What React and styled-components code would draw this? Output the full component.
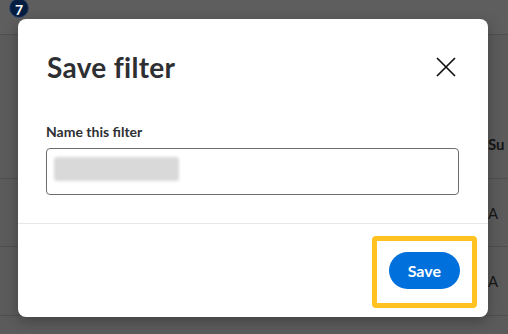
import React from 'react';
import styled, { createGlobalStyle } from 'styled-components';

const Global = createGlobalStyle`
  html, body { margin: 0; padding: 0; }
  body { font-family: Lato, "Noto Sans", sans-serif; }
  * { box-sizing: border-box; }
`;

const Page = styled.div`
  position: relative;
  width: 508px;
  height: 334px;
  overflow: hidden;
  background: #5b5b5b;
`;

const Table = styled.div`
  display: flex;
  flex-direction: column;
`;

const TableRow = styled.div`
  display: grid;
  grid-template-columns: 488px 1fr;
  align-items: ${p => p.$align || 'center'};
  height: ${p => p.$h}px;
  padding-bottom: ${p => p.$pb || 0}px;
  border-bottom: 1px solid #4f4f4f;
  background: ${p => p.$bg || 'transparent'};
`;

const Cell = styled.div`
  grid-column: 2;
  font-size: 15px;
  line-height: 18px;
  font-weight: ${p => (p.$head ? 700 : 400)};
  color: #161616;
  white-space: nowrap;
`;

const Badge = styled.div`
  position: absolute;
  left: 9px;
  top: -2px;
  width: 20px;
  height: 20px;
  border-radius: 50%;
  background: #041e42;
  border: 1px solid #3c4c66;
  color: #fff;
  font-size: 14px;
  font-weight: 700;
  display: flex;
  align-items: center;
  justify-content: center;
  padding-top: 2px;
`;

const Modal = styled.div`
  position: absolute;
  left: 18px;
  top: 19px;
  width: 470px;
  height: 298px;
  background: #fff;
  border-radius: 8px;
  box-shadow: 0 4px 14px rgba(0, 0, 0, 0.28);
  display: flex;
  flex-direction: column;
`;

const Header = styled.div`
  display: flex;
  align-items: center;
  justify-content: space-between;
  padding: 30px 32px 0 29px;
`;

const Title = styled.h2`
  margin: 0;
  font-size: 28px;
  line-height: 36px;
  font-weight: 700;
  letter-spacing: 0.3px;
  color: #2e2f32;
`;

const CloseButton = styled.button`
  border: 0;
  background: none;
  padding: 0;
  width: 20px;
  height: 20px;
  display: flex;
  cursor: pointer;
`;

const Body = styled.div`
  display: flex;
  flex-direction: column;
  gap: 6px;
  padding: 37px 29px 28px 28px;
  border-bottom: 1px solid #e6e6e6;
`;

const Label = styled.label`
  font-size: 14px;
  line-height: 20px;
  font-weight: 700;
  color: #2e2f32;
`;

const Input = styled.div`
  height: 47px;
  border: 1px solid #6d6e72;
  border-radius: 4px;
  padding: 8px 7px;
  display: flex;
`;

const Redacted = styled.div`
  width: 125px;
  height: 24px;
  background: #d9d9d9;
  border-radius: 3px;
  filter: blur(1.5px);
`;

const Footer = styled.div`
  display: flex;
  justify-content: flex-end;
  padding: 28px 28px 28px 28px;
`;

const Highlight = styled.div`
  position: relative;
`;

const Ring = styled.div`
  position: absolute;
  left: -17px;
  right: -17px;
  top: -16px;
  bottom: -19px;
  border: 5px solid #ffc220;
  border-radius: 4px;
  pointer-events: none;
`;

const PrimaryButton = styled.button`
  height: 37px;
  padding: 0 19px;
  border: 0;
  border-radius: 999px;
  background: #0071dc;
  color: #fff;
  font-family: Lato, "Noto Sans", sans-serif;
  font-size: 16px;
  font-weight: 700;
  line-height: 37px;
  cursor: pointer;
`;

export default function App() {
  return (
    <>
      <Global />
      <Page>
        <Table>
          <TableRow $h={35} $bg="#5e5e5e" />
          <TableRow $h={144} $align="end" $pb={25}>
            <Cell $head>Su</Cell>
          </TableRow>
          <TableRow $h={68}>
            <Cell>A</Cell>
          </TableRow>
          <TableRow $h={69}>
            <Cell>A</Cell>
          </TableRow>
        </Table>
        <Badge>7</Badge>
        <Modal role="dialog" aria-label="Save filter">
          <Header>
            <Title>Save filter</Title>
            <CloseButton aria-label="Close">
              <svg width="20" height="20" viewBox="0 0 20 20">
                <path d="M1 1 L19 19 M19 1 L1 19" stroke="#111" strokeWidth="1.7" fill="none" />
              </svg>
            </CloseButton>
          </Header>
          <Body>
            <Label>Name this filter</Label>
            <Input>
              <Redacted />
            </Input>
          </Body>
          <Footer>
            <Highlight>
              <PrimaryButton>Save</PrimaryButton>
              <Ring />
            </Highlight>
          </Footer>
        </Modal>
      </Page>
    </>
  );
}
